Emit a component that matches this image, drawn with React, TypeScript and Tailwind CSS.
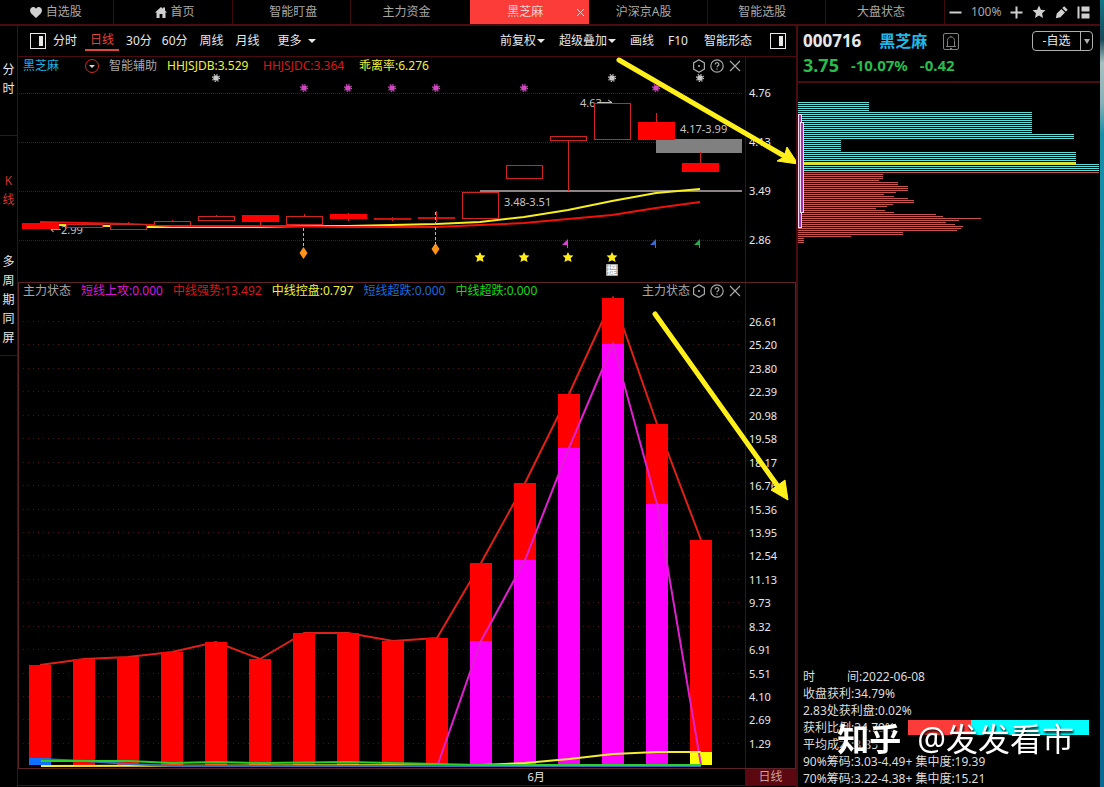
import type { ReactNode } from "react";

const TABS = ["自选股", "首页", "智能盯盘", "主力资金", "黑芝麻", "沪深京A股", "智能选股", "大盘状态"];

const PRICE_AXIS = ["4.76", "4.13", "3.49", "2.86"];

const STATE_AXIS = [
  "26.61", "25.20", "23.80", "22.39", "20.98", "19.58", "18.17", "16.76", "15.36", "13.95",
  "12.54", "11.13", "9.73", "8.32", "6.91", "5.51", "4.10", "2.69", "1.29",
];

type Candle = {
  top: number;
  bottom: number;
  high?: number;
  low?: number;
  filled?: boolean;
};

// y values are in chart units, one candle every 44 units
const CANDLES: Candle[] = [
  { top: 149, bottom: 155, filled: true },
  { top: 150, bottom: 153 },
  { top: 150, bottom: 155, high: 148 },
  { top: 147, bottom: 151, high: 146 },
  { top: 142, bottom: 146, high: 141 },
  { top: 141, bottom: 148, low: 151, filled: true },
  { top: 142, bottom: 150, high: 140 },
  { top: 140, bottom: 145, high: 139, low: 147, filled: true },
  { top: 144, bottom: 146, high: 143, low: 147, filled: true },
  { top: 143, bottom: 145, high: 137, low: 148, filled: true },
  { top: 118, bottom: 144 },
  { top: 91, bottom: 104 },
  { top: 62, bottom: 66, low: 117 },
  { top: 29, bottom: 65 },
  { top: 48, bottom: 66, high: 39, filled: true },
  { top: 89, bottom: 98, high: 78, filled: true },
];

const BARS = [367, 361, 359, 354, 344, 361, 335, 335, 343, 340, 265, 185, 96, 0, 126, 242];
const ATTACK: Record<number, number> = { 10: 343, 11: 262, 12: 150, 13: 46, 14: 206 };
const BASE = 467;

// chip distribution: [row count, width]
const CHIPS_ABOVE = [[5, 71], [11, 234], [3, 276], [6, 43], [5, 278], [1, 278], [4, 301]];
const CHIPS_BELOW = [
  [1, 301], [3, 85], [1, 81], [2, 100], [3, 110], [1, 98], [1, 86], [1, 96], [1, 110], [2, 116],
  [1, 95], [1, 89], [1, 78], [1, 87], [1, 96], [1, 138], [1, 145], [1, 183], [1, 161], [1, 148],
  [1, 157], [1, 165], [1, 163], [1, 159], [2, 105], [1, 53], [3, 6],
];

const expand = (runs: number[][]) => runs.flatMap(([count, width]) => Array<number>(count).fill(width));
const barCenter = (i: number) => 21 + Math.round(i * 44.07);

const Caret = () => (
  <svg viewBox="0 0 8 4" className="h-1 w-2" aria-hidden="true">
    <path d="M0 0H8L4 4Z" fill="currentColor" />
  </svg>
);

const SplitIcon = () => (
  <svg viewBox="0 0 16 16" className="block size-4" aria-hidden="true">
    <rect x="0.5" y="0.5" width="15" height="15" fill="none" stroke="currentColor" />
    <rect x="9" y="3" width="4" height="10" fill="currentColor" />
  </svg>
);

const ToolButton = ({ children, label, className = "" }: { children: ReactNode; label?: string; className?: string }) => (
  <button type="button" aria-label={label} className={`flex shrink-0 items-center whitespace-nowrap ${className}`}>
    {children}
  </button>
);

const PanelControls = () => (
  <div className="flex shrink-0 items-center gap-1 text-[#a8a8a8]">
    <ToolButton label="设置">
      <svg viewBox="0 0 14 14" className="size-3.5" fill="none" stroke="currentColor" strokeWidth="1.2">
        <path d="M7 0.8L12.4 3.9V10.1L7 13.2L1.6 10.1V3.9Z" />
        <circle cx="7" cy="7" r="1.1" fill="currentColor" stroke="none" />
      </svg>
    </ToolButton>
    <ToolButton label="帮助">
      <svg viewBox="0 0 14 14" className="size-3.5" fill="none" stroke="currentColor" strokeWidth="1.2">
        <circle cx="7" cy="7" r="6.2" />
        <path d="M5.1 5.6C5.1 3.1 8.9 3.1 8.9 5.5C8.9 6.8 7 6.8 7 8.3M7 9.5V10.7" />
      </svg>
    </ToolButton>
    <ToolButton label="关闭">
      <svg viewBox="0 0 14 14" className="size-3.5" stroke="currentColor" strokeWidth="1.2">
        <path d="M2 2L12 12M12 2L2 12" />
      </svg>
    </ToolButton>
  </div>
);

const TopTabs = () => (
  <header className="flex h-[26px] shrink-0 border-b-2 border-[#4a0c10] text-[#a8a8a8]">
    <nav className="-ml-[5px] grid min-w-0 flex-1 grid-cols-8">
      {TABS.map((tab, i) =>
        tab === "黑芝麻" ? (
          <div key={tab} className="relative flex bg-[#fc3c38] text-[#f4d0cc]">
            <button type="button" className="w-full pr-2">{tab}</button>
            <button type="button" aria-label="关闭标签" className="absolute right-1 top-2">
              <svg viewBox="0 0 9 9" className="size-[9px]" stroke="currentColor">
                <path d="M1 1L8 8M8 1L1 8" />
              </svg>
            </button>
          </div>
        ) : (
          <button
            key={tab}
            type="button"
            className={`flex items-center justify-center gap-1 whitespace-nowrap ${i > 2 ? "pr-2" : "pl-1"} ${i === 3 ? "" : "border-r border-[#3e0a0c]"}`}
          >
            {i === 0 && (
              <svg viewBox="0 0 12 11" className="h-[11px] w-3" fill="#d0d0d0">
                <path d="M6 11L1.2 6.4C-0.4 4.6-0.2 2.2 1 1C2.6-0.5 5 0 6 1.8C7-0 9.4-0.5 11 1C12.2 2.2 12.4 4.6 10.8 6.4Z" />
              </svg>
            )}
            {i === 1 && (
              <svg viewBox="0 0 12 11" className="h-[11px] w-3" fill="#d0d0d0">
                <path d="M6 0L8 1.8V0.6H10V3.6L12 5.6H10.5V11H7.4V7H4.6V11H1.5V5.6H0Z" />
              </svg>
            )}
            {tab}
          </button>
        )
      )}
    </nav>
    <div className="flex w-[155px] shrink-0 items-center justify-between pl-1 pr-2.5 text-[#d0d0d0]">
      <button type="button" aria-label="缩小">
        <svg viewBox="0 0 13 13" className="size-[13px]"><path d="M0.5 5.5H12.5V7.5H0.5Z" fill="currentColor" /></svg>
      </button>
      <span className="text-[#a8a8a8]">100%</span>
      <button type="button" aria-label="放大">
        <svg viewBox="0 0 13 13" className="size-[13px]"><path d="M0.5 5.5H5.5V0.5H7.5V5.5H12.5V7.5H7.5V12.5H5.5V7.5H0.5Z" fill="currentColor" /></svg>
      </button>
      <button type="button" aria-label="收藏">
        <svg viewBox="0 0 14 14" className="size-3.5"><path d="M7 0.5L8.9 4.7L13.5 5.2L10.1 8.3L11 13L7 10.6L3 13L3.9 8.3L0.5 5.2L5.1 4.7Z" fill="currentColor" /></svg>
      </button>
      <button type="button" aria-label="编辑">
        <svg viewBox="0 0 13 13" className="size-[13px]"><path d="M0.8 12.2L1.8 7.6L6.4 3L10 6.6L5.4 11.2ZM7.3 2.1L9.2 0.3L12.7 3.8L10.9 5.7Z" fill="currentColor" /></svg>
      </button>
      <button type="button" aria-label="布局">
        <svg viewBox="0 0 13 13" className="size-[13px]"><path d="M0.5 0.5H2.5V12.5H0.5ZM4.5 0.5H12.5V5.5H4.5ZM4.5 7.5H12.5V12.5H4.5Z" fill="currentColor" /></svg>
      </button>
    </div>
  </header>
);

const SideRail = () => (
  <nav className="w-[18px] shrink-0 border-r border-[#4a0c10] text-center leading-[19px]">
    <button type="button" className="block h-[110px] w-full border-b border-[#4a0c10] px-0.5 pb-1">分时</button>
    <button type="button" className="block h-[108px] w-full px-0.5 text-[#d0362e]">K<br />线</button>
    <button type="button" className="block h-[112px] w-full border-b border-[#4a0c10] px-0.5">多周期同屏</button>
  </nav>
);

const Toolbar = () => (
  <div className="flex h-[31px] items-center justify-between border-b border-[#4a0c10] pl-3 pr-2.5">
    <div className="flex h-full items-center">
      <ToolButton label="左侧栏"><SplitIcon /></ToolButton>
      <ToolButton className="ml-[7px]">分时</ToolButton>
      <ToolButton className="ml-2 h-5 border-b-2 border-[#e0453c] px-[5px] text-[#e0453c]">日线</ToolButton>
      <ToolButton className="ml-[7px]">30分</ToolButton>
      <ToolButton className="ml-2.5">60分</ToolButton>
      <ToolButton className="ml-3">周线</ToolButton>
      <ToolButton className="ml-3">月线</ToolButton>
      <ToolButton className="ml-[18px] gap-1.5">更多<Caret /></ToolButton>
    </div>
    <div className="flex items-center gap-3.5">
      <ToolButton className="gap-px">前复权<Caret /></ToolButton>
      <ToolButton className="gap-px">超级叠加<Caret /></ToolButton>
      <ToolButton>画线</ToolButton>
      <ToolButton className="w-[22px]">F10</ToolButton>
      <ToolButton>智能形态</ToolButton>
      <ToolButton label="右侧栏" className="ml-1"><SplitIcon /></ToolButton>
    </div>
  </div>
);

const Sun = ({ x, y, color }: { x: number; y: number; color: string }) => (
  <g transform={`translate(${x} ${y})`}>
    <circle r="2.8" fill={color} />
    <circle r="3.5" fill="none" stroke={color} strokeWidth="1.2" strokeDasharray="1.2 1.55" />
  </g>
);

const PriceChart = () => (
  <svg viewBox="0 0 726 208" className="block w-full overflow-visible" role="img" aria-label="黑芝麻 日线">
    <g stroke="#5a1212" strokeDasharray="1 1">
      {[19.5, 68.5, 117.5, 166.5].map((y) => <path key={y} d={`M0 ${y}H724`} />)}
    </g>
    <rect x="637" y="65" width="86" height="14" fill="#808080" />
    <path d="M461 117H723" stroke="#8c8484" strokeWidth="2" />

    <g fill="#c4c4c4" fontSize="11">
      <text x="31" y="160">←2.99</text>
      <text x="561" y="33">4.63</text>
      <path d="M579 28.5H593M589 26L593 28.5" fill="none" stroke="#c4c4c4" />
      <text x="661" y="59">4.17-3.99</text>
      <text x="485" y="132">3.48-3.51</text>
    </g>

    <g fill="none" strokeWidth="2" strokeLinejoin="round">
      <path d="M40 151L91 152L109 153L197 153L241 153L285 152L329 152L373 151L417 150L461 148L505 143L549 136L593 127L637 119L681 115" stroke="#f6ee1e" />
      <path d="M21 148L65 149L109 150L153 152L241 152L329 153L417 153L461 151L505 149L549 145L593 141L637 134L681 128" stroke="#f01208" />
    </g>

    {CANDLES.map((c, i) => {
      const x = 3 + i * 44;
      return (
        <g key={i} stroke="#d02420">
          {c.high !== undefined && <path d={`M${x + 18.5} ${c.high}V${c.top}`} />}
          {c.low !== undefined && <path d={`M${x + 18.5} ${c.bottom}V${c.low}`} />}
          {c.filled ? (
            <rect x={x} y={c.top} width="37" height={c.bottom - c.top} fill={c.bottom - c.top < 3 ? "#c8100c" : "#ff0000"} stroke="none" />
          ) : (
            <rect x={x + 0.5} y={c.top + 0.5} width="36" height={c.bottom - c.top} fill="#000" />
          )}
        </g>
      );
    })}

    {[[284.5, 154, 179], [416.5, 138, 175]].map(([x, y, d]) => (
      <g key={x}>
        <path d={`M${x} ${y}V${d}`} stroke="#f0a860" strokeDasharray="3 2" />
        <path d={`M${x} ${d - 6}L${x + 4} ${d}L${x} ${d + 6}L${x - 4} ${d}Z`} fill="#ff9418" />
      </g>
    ))}
    {[461, 505, 549, 593].map((x) => (
      <path key={x} transform={`translate(${x} 183)`} d="M0 -5L1.6 -1.8L5.4 -1.4L2.7 1.2L3.6 5L0 3.2L-3.6 5L-2.7 1.2L-5.4 -1.4L-1.6 -1.8Z" fill="#ffec18" />
    ))}
    {[[549, "#e43cd8"], [637, "#3a6ae0"], [681, "#20b050"]].map(([x, color]) => (
      <path key={x} transform={`translate(${x} 165)`} d="M0 0L-6 6H-1V9H0Z" fill={String(color)} />
    ))}
    <rect x="587" y="190" width="12" height="12" rx="1" fill="#a8a8a8" />
    <text x="588" y="200" fontSize="10" fill="#fff" fontWeight="700">提</text>

    {[285, 329, 373, 417, 505, 637].map((x) => <Sun key={x} x={x} y={14} color="#d048c0" />)}
    {[197, 593, 681].map((x) => <Sun key={x} x={x} y={4} color="#c8c8c8" />)}
  </svg>
);

const StateChart = () => {
  const tops = BARS.map((y, i) => `${barCenter(i)},${y}`).join(" ");
  return (
    <svg viewBox="0 0 726 470" className="block w-full overflow-visible" role="img" aria-label="主力状态">
      <g stroke="#4c1414" strokeDasharray="1 4">
        {STATE_AXIS.map((label, i) => {
          const y = Math.round(23 + i * 23.44) + 0.5;
          return <path key={label} d={`M4 ${y}H724`} />;
        })}
      </g>
      <polyline points={tops} fill="none" stroke="#e02018" strokeWidth="2" />
      {BARS.map((y, i) => <rect key={i} x={barCenter(i) - 11} y={y} width="22" height={BASE - y} fill="#ff0000" />)}
      {Object.entries(ATTACK).map(([i, y]) => (
        <rect key={i} x={barCenter(Number(i)) - 11} y={y} width="22" height={BASE - y} fill="#ff00ff" />
      ))}
      <rect x="10" y="460" width="22" height="7" fill="#1070ff" />
      <rect x={barCenter(15) - 11} y="454" width="22" height="13" fill="#ffff00" />
      <g fill="none" strokeWidth="2">
        <path d="M419 466L462 343L506 262L550 150L594 46L638 206L682 467" stroke="#e020d0" />
        <path d="M22 468L462 467L506 465L550 461L594 456L638 454L682 454" stroke="#f4ec30" />
        <path d="M22 461L66 463L110 466L154 468H682" stroke="#3870b8" />
        <path d="M22 463H110L153 465L197 464L241 465L329 464L373 465L417 466L461 467H682" stroke="#28d028" />
      </g>
    </svg>
  );
};

const ChipProfile = () => {
  const above = expand(CHIPS_ABOVE);
  const below = expand(CHIPS_BELOW);
  return (
    <svg viewBox="0 0 302 162" className="block w-full" role="img" aria-label="筹码分布">
      {above.map((w, i) => <rect key={i} x="0" y={19 + i * 2} width={w} height="1" fill="#62dcd8" />)}
      {below.map((w, i) => <rect key={i} x="0" y={89 + i * 2} width={w} height="1" fill="#c85450" />)}
      <rect x="0" y="79" width="278" height="3" fill="#dce030" />
      <rect x="0.5" y="31.5" width="3" height="113" fill="#a030b0" stroke="#f4dcf4" />
      <rect x="2.5" y="39.5" width="3" height="90" fill="#a030b0" stroke="#f4dcf4" />
    </svg>
  );
};

const QuotePanel = () => (
  <aside className="relative flex w-[304px] shrink-0 flex-col border-l-2 border-[#4a0c10]">
    <div className="flex h-[57px] flex-col border-b-2 border-[#4a0c10] pl-[5px] pr-[7px] pt-[3px] font-bold">
      <div className="flex h-6 items-center">
        <span className="text-[17px]">000716</span>
        <span className="ml-[18px] text-base text-[#20b8e8]">黑芝麻</span>
        <button type="button" aria-label="预警" className="ml-4">
          <svg viewBox="0 0 16 17" className="h-[17px] w-4" fill="none" stroke="#808080">
            <rect x="0.5" y="0.5" width="15" height="16" rx="1.5" />
            <path d="M3 13.5H13M4.5 13V7.5C4.5 2.8 11.5 2.8 11.5 7.5V13M8 3V4M7 15.5H9" />
          </svg>
        </button>
        <div className="ml-auto flex h-5 rounded-sm border border-[#b0b0b0] font-normal">
          <button type="button" className="w-[47px]">-自选</button>
          <button type="button" aria-label="更多自选" className="flex w-3 items-center justify-center border-l border-[#b0b0b0]">
            <svg viewBox="0 0 6 5" className="h-[5px] w-1.5"><path d="M0 0H6L3 5Z" fill="#b0b0b0" /></svg>
          </button>
        </div>
      </div>
      <div className="flex h-6 items-center text-[#28bc4c]">
        <span className="text-[18px]">3.75</span>
        <span className="ml-3 text-[15px]">-10.07%</span>
        <span className="ml-3 text-[15px]">-0.42</span>
      </div>
    </div>
    <ChipProfile />
    <div className="mt-auto pl-[5px] leading-[17px] text-[#dcdcdc]">
      <p className="flex gap-8"><span>时</span><span>间:2022-06-08</span></p>
      <p>收盘获利:34.79%</p>
      <p>2.83处获利盘:0.02%</p>
      <div className="flex items-center justify-between pr-[11px]">
        <p>获利比例:34.79%</p>
        <div className="flex h-[15px] w-[181px] bg-[#00ffff]">
          <div className="bg-[#fc3c38]" style={{ width: "34.79%" }} />
        </div>
      </div>
      <p>平均成本:3.85</p>
      <p>90%筹码:3.03-4.49+ 集中度:19.39</p>
      <p>70%筹码:3.22-4.38+ 集中度:15.21</p>
    </div>
    <div className="pointer-events-none absolute bottom-6 right-[26px] flex items-center gap-4 whitespace-nowrap text-[32px] leading-[48px] text-white drop-shadow-[1px_2px_1px_#000000]">
      <span className="font-bold">知乎</span>
      <span>@发发看市</span>
    </div>
  </aside>
);

export default function App() {
  return (
    <div className="flex min-h-screen overflow-x-hidden bg-black font-['Noto_Sans','Noto_Sans_CJK_SC',sans-serif] text-[12px] leading-4 text-[#e8e8e8]">
      <div className="flex min-w-0 flex-1 flex-col">
        <TopTabs />
        <div className="flex flex-1">
          <SideRail />
          <main className="relative min-w-0 flex-1">
            <Toolbar />
            <section className="flex border-l border-transparent">
              <div className="min-w-0 flex-1">
                <div className="flex h-[17px] items-center justify-between pl-1 pr-[3px]">
                  <div className="flex items-center gap-2.5 whitespace-nowrap">
                    <span className="text-[#20b0e0]">黑芝麻</span>
                    <button type="button" aria-label="选择指标" className="ml-4">
                      <svg viewBox="0 0 14 14" className="block size-3.5">
                        <circle cx="7" cy="7" r="6.5" fill="none" stroke="#d02820" />
                        <path d="M4 6H10L7 9Z" fill="#d8d8d8" />
                      </svg>
                    </button>
                    <span className="text-[#a8a8a8]">智能辅助</span>
                    <span className="w-[86px] text-[#f0f040]">HHJSJDB:3.529</span>
                    <span className="w-[86px] text-[#d81818]">HHJSJDC:3.364</span>
                    <span className="text-[#f0f040]">乖离率:6.276</span>
                  </div>
                  <PanelControls />
                </div>
                <PriceChart />
              </div>
              <div className="flex w-[51px] shrink-0 flex-col justify-between border-l border-[#4a0c10] pb-[34px] pl-[3px] pt-7 text-[11px]">
                {PRICE_AXIS.map((label) => <span key={label}>{label}</span>)}
              </div>
            </section>
            <section className="flex border border-[#5c2428]">
              <div className="min-w-0 flex-1">
                <div className="flex h-[15px] items-center justify-between pl-1 pr-[3px]">
                  <div className="flex items-center gap-2.5 whitespace-nowrap">
                    <span className="text-[#a8a8a8]">主力状态</span>
                    <span className="text-[#d818d8]">短线上攻:0.000</span>
                    <span className="text-[#d81818]">中线强势:13.492</span>
                    <span className="text-[#f0f040]">中线控盘:0.797</span>
                    <span className="text-[#1c6cd8]">短线超跌:0.000</span>
                    <span className="text-[#18d818]">中线超跌:0.000</span>
                  </div>
                  <div className="flex items-center gap-0.5">
                    <span className="whitespace-nowrap text-[#a8a8a8]">主力状态</span>
                    <PanelControls />
                  </div>
                </div>
                <StateChart />
              </div>
              <div className="flex w-[50px] shrink-0 flex-col justify-between border-l border-[#4a0c10] pb-4 pl-[3px] pt-[31px] text-[11px]">
                {STATE_AXIS.map((label) => <span key={label}>{label}</span>)}
              </div>
            </section>
            <footer className="flex h-[17px] items-end border-b border-[#4a0c10]">
              <div className="min-w-0 flex-1 pl-[65.5%] text-[11px]">6月</div>
              <div className="w-[51px] bg-[#5c0810] text-center text-[#c8a0a0]">日线</div>
            </footer>
            <svg viewBox="0 0 778 500" className="pointer-events-none absolute left-0 top-0 w-full overflow-visible" aria-hidden="true">
              <g fill="#fff01c" stroke="#fff01c">
                <path d="M601 34L768 131" strokeWidth="5" strokeLinecap="round" />
                <path d="M780 138L759 135L766 131L769 121Z" />
                <path d="M637 288L759 459" strokeWidth="5" strokeLinecap="round" />
                <path d="M770 474L753 464L760 459L767 454Z" />
              </g>
            </svg>
          </main>
          <QuotePanel />
        </div>
      </div>
      <div className="w-1 shrink-0 bg-[linear-gradient(#107888_0%,#184858_5%,#a8c0c0_8%,#88b0b8_13%,#1890a8_17%,#0880a0_60%,#086890_100%)]" />
    </div>
  );
}
